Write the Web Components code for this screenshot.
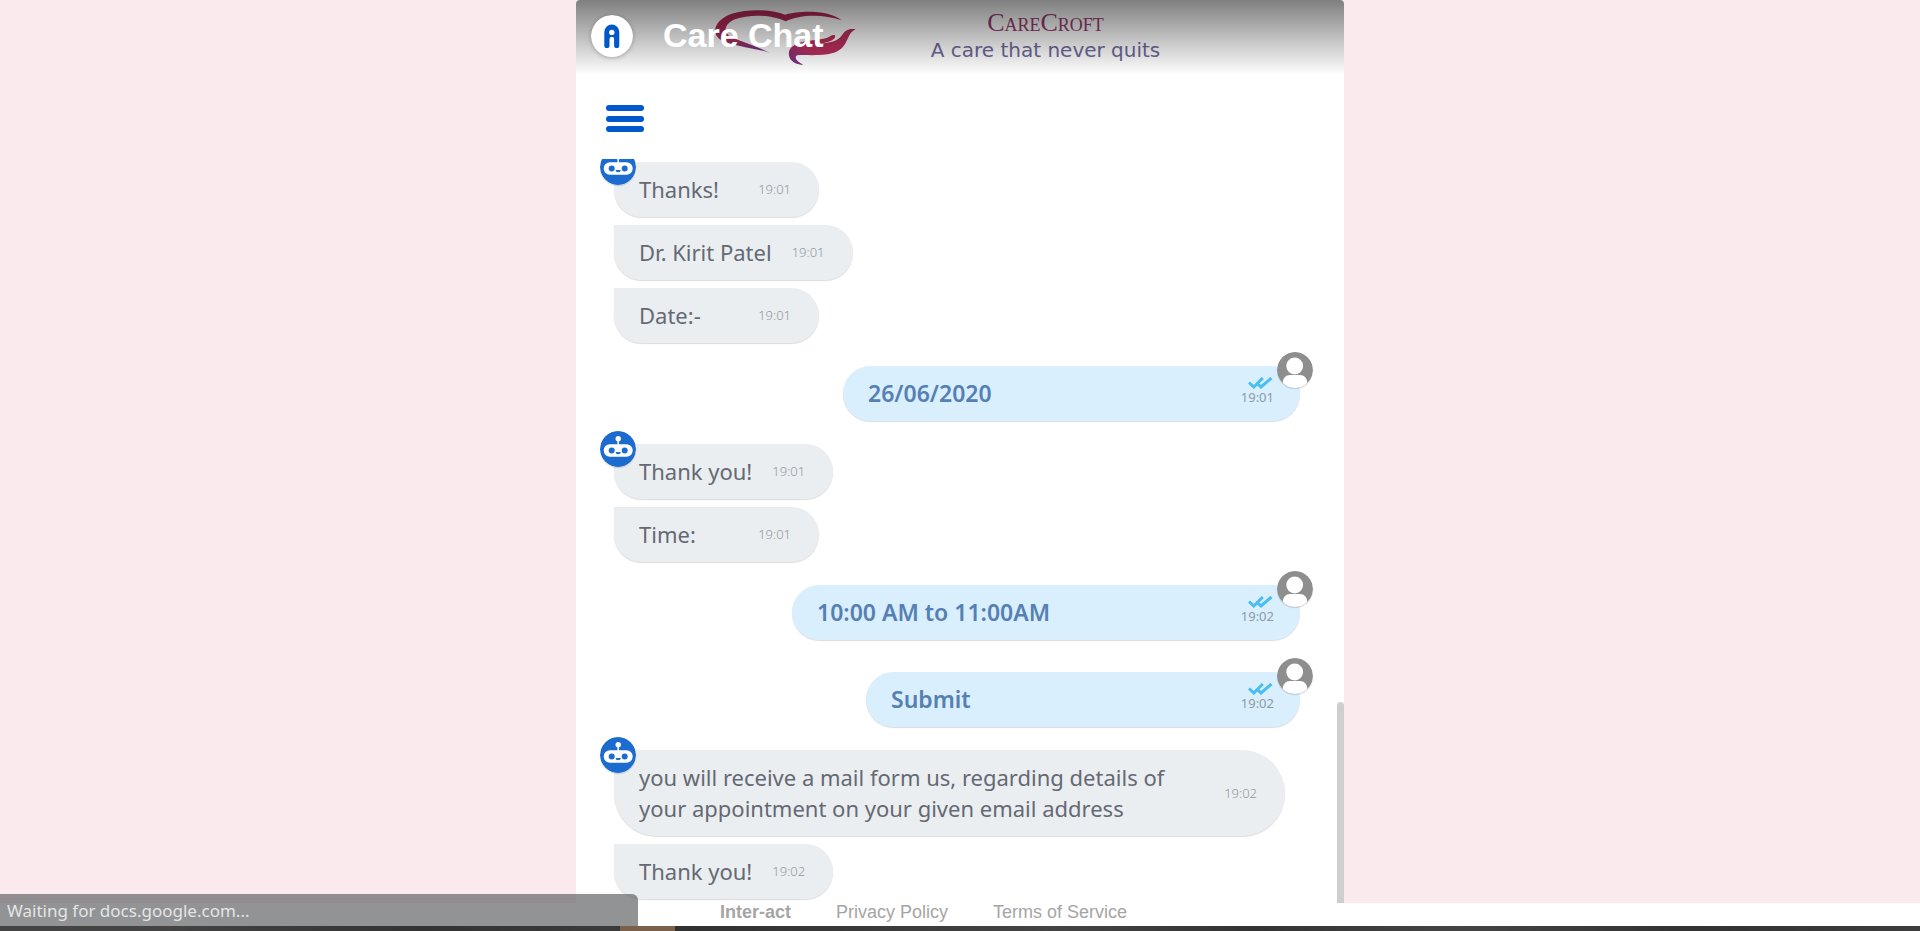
<!DOCTYPE html>
<html lang="en">
<head>
<meta charset="utf-8">
<title>Care Chat</title>
<style>
  html, body { height: 100%; margin: 0; }
  body { background: #faeaee; font-family: "Noto Sans", "Open Sans", sans-serif; overflow: hidden; }
</style>
</head>
<body>
<chat-page>
  <chat-header slot="header" name="Care Chat"></chat-header>
  <chat-menu slot="header"></chat-menu>
  <message-group>
    <bot-message avatar time="19:01">Thanks!</bot-message>
    <bot-message time="19:01">Dr. Kirit Patel</bot-message>
    <bot-message time="19:01">Date:-</bot-message>
  </message-group>
  <message-group>
    <user-message time="19:01" style="--bubble-width:457px">26/06/2020</user-message>
  </message-group>
  <message-group>
    <bot-message avatar time="19:01">Thank you!</bot-message>
    <bot-message time="19:01">Time:</bot-message>
  </message-group>
  <message-group spaced>
    <user-message time="19:02" style="--bubble-width:508px">10:00 AM to 11:00AM</user-message>
    <user-message time="19:02" style="--bubble-width:434px">Submit</user-message>
  </message-group>
  <message-group>
    <bot-message avatar wide time="19:02">you will receive a mail form us, regarding details of your appointment on your given email address</bot-message>
    <bot-message time="19:02">Thank you!</bot-message>
  </message-group>
  <page-footer slot="footer"></page-footer>
  <load-status slot="footer">Waiting for docs.google.com...</load-status>
</chat-page>

<script>
const define = (name, html, setup) => {
  const template = document.createElement('template');
  template.innerHTML = html;
  customElements.define(name, class extends HTMLElement {
    constructor() {
      super();
      this.attachShadow({ mode: 'open' }).append(template.content.cloneNode(true));
      if (setup) setup(this, this.shadowRoot);
    }
  });
};

define('chat-page', `
<style>
  :host { display: flex; flex-direction: column; height: 100vh; position: relative; }
  main { flex: 1; min-height: 0; width: 40%; min-width: 700px; margin: 0 auto; background: #fff;
         display: flex; flex-direction: column; border-radius: 4px 4px 0 0; overflow: hidden; }
  .log { flex: 1; min-height: 0; display: flex; overflow: hidden; }
  .messages { flex: 1; display: flex; flex-direction: column; gap: 23px; padding: 3px 37px 0 38px; }
  .thumb { width: 7px; height: 27%; align-self: flex-end; background: #cecece; border-radius: 4px 4px 0 0; }
</style>
<main>
  <slot name="header"></slot>
  <section class="log" aria-label="Conversation">
    <div class="messages"><slot></slot></div>
    <div class="thumb"></div>
  </section>
</main>
<slot name="footer"></slot>`);

define('brand-banner', `
<style>
  :host { display: flex; align-items: flex-start; height: 75px; box-sizing: border-box; padding: 8px 0 0 137px; background: #fff; }
  svg { width: 145px; height: 58px; flex: none; }
  .words { flex: none; width: 331px; margin-left: 22px; text-align: center; white-space: nowrap; }
  .brand { font: 26px/30px "Liberation Serif", serif; font-variant: small-caps; color: #993c72; }
  .tag { font: 20px/24px "DejaVu Sans", sans-serif; color: #6f689a; }
</style>
<svg viewBox="40 24 435 174" aria-hidden="true">
  <defs>
    <linearGradient id="heart" x1="0" y1="0" x2="0" y2="1"><stop offset="0" stop-color="#b52a58"/><stop offset=".7" stop-color="#b02c5c"/><stop offset="1" stop-color="#6b3590"/></linearGradient>
    <linearGradient id="hand" x1="1" y1="0" x2="0" y2="1"><stop offset="0" stop-color="#b83058"/><stop offset=".65" stop-color="#bd3060"/><stop offset="1" stop-color="#67308a"/></linearGradient>
  </defs>
  <path fill="url(#heart)" d="M210 158C160 142 90 138 58 116C32 92 52 56 96 41C150 25 218 29 256 44C300 31 390 29 426 61C370 41 300 43 258 64C210 43 150 42 106 58C72 72 70 98 94 111C130 126 170 139 210 158Z"/>
  <path fill="url(#hand)" d="M468 88C447 84 436 92 425 108C416 121 397 127 370 130C394 124 409 118 406 106C398 102 393 110 381 114C358 121 321 119 296 130C268 140 264 157 270 173C277 187 292 194 311 194C292 185 282 173 292 166C321 163 379 171 413 154C449 135 439 101 468 88Z"/>
</svg>
<div class="words">
  <div class="brand">CareCroft</div>
  <div class="tag">A care that never quits</div>
</div>`);

define('chat-header', `
<style>
  :host { display: block; position: relative; flex: none; }
  header { position: absolute; inset: 0; display: flex; align-items: center; gap: 30px; padding: 0 15px 4px;
           background: linear-gradient(rgba(0,0,0,.5), rgba(0,0,0,0)); }
  .logo { width: 42px; height: 42px; border-radius: 50%; flex: none; box-shadow: 0 1px 4px rgba(0,0,0,.25); }
  h1 { margin: 0; padding-bottom: 2px; font: bold 34px/38px "Liberation Sans", Arial, sans-serif; color: #fff; white-space: nowrap; }
</style>
<brand-banner></brand-banner>
<header>
  <svg class="logo" viewBox="0 0 42 42" aria-hidden="true">
    <circle cx="21" cy="21" r="21" fill="#fff"/>
    <path fill="#0058cc" d="M13.3 17a7.5 7.5 0 0 1 15 0V30.5a2.3 2.3 0 0 1-5.2 0V24a2.2 2.2 0 0 0-4.6 0V30.500a2.3 2.3 0 0 1-5.200 0Z"/>
    <circle cx="20.800" cy="17.400" r="2.700" fill="#fff"/>
  </svg>
  <h1></h1>
</header>`, (el, root) => { root.querySelector('h1').textContent = el.getAttribute('name'); });

define('chat-menu', `
<style>
  :host { display: flex; flex: none; padding: 30px 30px 27px; }
  button { display: flex; flex-direction: column; justify-content: space-between; width: 38px; height: 27px; padding: 0; border: 0; background: none; }
  i { height: 6px; border-radius: 3px; background: #0058cc; }
</style>
<button type="button" aria-label="Menu"><i></i><i></i><i></i></button>`);

define('message-group', `
<style>
  :host { display: flex; flex-direction: column; gap: 8px; flex: none; }
  :host([spaced]) { gap: 32px; }
</style>
<slot></slot>`);

define('bot-message', `
<style>
  :host { display: flex; position: relative; }
  .bubble { display: flex; align-items: center; justify-content: space-between; gap: 20px; min-width: 205px; box-sizing: border-box;
            padding: 12px 28px 12px 25px; border-radius: 0 50px 50px 50px; background: #eaeef1; box-shadow: 0 1px 1px rgba(0,0,0,.14);
            font-size: 22px; line-height: 31px; color: #656973; }
  :host([wide]) .bubble { width: 671px; gap: 40px; }
  time { font-size: 13px; color: #94979b; font-weight: 300; }
  .avatar { display: none; position: absolute; left: -14px; top: -13px; width: 36px; height: 36px; border-radius: 50%; box-shadow: 0 1px 1px rgba(0,0,0,.15); }
  :host([avatar]) .avatar { display: block; }
</style>
<div class="bubble"><span><slot></slot></span><time></time></div>
<svg class="avatar" viewBox="0 0 36 36" aria-hidden="true">
  <circle cx="18" cy="18" r="18" fill="#1b6bd0"/>
  <circle cx="18.200" cy="7.700" r="2.700" fill="#fff"/>
  <path d="M18.200 9v5" stroke="#fff" stroke-width="1.500"/>
  <rect x="3.700" y="13.300" width="29" height="12.400" rx="6.200" fill="#fff"/>
  <g fill="#1b6bd0"><circle cx="11.700" cy="19.600" r="3"/><circle cx="24.700" cy="19.600" r="3"/><path d="M15.600 21h5.200a2.600 2.200 0 0 1-5.200 0Z"/></g>
</svg>`, (el, root) => { root.querySelector('time').textContent = el.getAttribute('time'); });

define('user-message', `
<style>
  :host { display: flex; justify-content: flex-end; position: relative; }
  .bubble { display: flex; align-items: center; justify-content: space-between; box-sizing: border-box; width: var(--bubble-width, auto);
            height: 55px; padding: 0 26px 0 25px; border-radius: 28px; background: #d9effd; box-shadow: 0 1px 1px rgba(0,0,0,.14);
            font-size: 23px; line-height: 31px; font-weight: 600; color: #5680b3; }
  .meta { display: flex; flex-direction: column; align-items: flex-end; padding-bottom: 5px; }
  .ticks { width: 26px; height: 12px; }
  time { font-size: 13px; line-height: 16px; font-weight: 400; color: #8b9ba5; }
  .avatar { position: absolute; right: -13px; top: -14px; width: 36px; height: 36px; border-radius: 50%; box-shadow: 0 1px 1px rgba(0,0,0,.15); }
</style>
<div class="bubble"><span><slot></slot></span>
  <div class="meta">
    <svg class="ticks" viewBox="0 0 26 12" fill="none" stroke="#4abdf3" stroke-width="3" aria-label="Read"><path d="M1 5.500 5.800 10 14.800 1M10.300 7.500 13 10 23.500 1"/></svg>
    <time></time>
  </div>
</div>
<svg class="avatar" viewBox="0 0 36 36" aria-hidden="true">
  <defs><clipPath id="disc"><circle cx="18" cy="18" r="18"/></clipPath></defs>
  <g clip-path="url(#disc)">
    <rect width="36" height="36" fill="#8e8e8e"/>
    <circle cx="17.700" cy="14" r="8.400" fill="#fff"/>
    <path fill="#fff" d="M5.600 32C5.600 26 9 23 13 23H23C27 23 30.400 26 30.400 32L25 38H11Z"/>
  </g>
</svg>`, (el, root) => { root.querySelector('time').textContent = el.getAttribute('time'); });

define('page-footer', `
<style>
  :host { display: block; flex: none; font-family: "Liberation Sans", Arial, sans-serif; }
  nav { display: flex; gap: 45px; padding-left: 37.5%; background: #fff; font-size: 18px; line-height: 18px; padding-bottom: 5px; }
  a { color: #a5a5a5; text-decoration: none; white-space: nowrap; }
  .brand { font-weight: bold; }
  .strip { height: 5px; background: linear-gradient(90deg, #444 0 8%, #333 22%, #3b3b3b 32.300%, #7b604c 32.300% 35.150%, #303030 35.150%, #444 55%, #333 65%, #444 76%, #323232 88%, #3d3d3d); }
</style>
<footer>
  <nav><a class="brand" href="#">Inter-act</a><a href="#">Privacy Policy</a><a href="#">Terms of Service</a></nav>
  <div class="strip"></div>
</footer>`);

define('load-status', `
<style>
  :host { display: block; position: absolute; left: 0; bottom: 5px; width: 638px; height: 32px; box-sizing: border-box; padding-left: 7px;
          border-radius: 0 6px 0 0; background: rgba(87,89,92,.65); color: #e3e5e6; font-size: 17px; line-height: 33px; white-space: nowrap; }
</style>
<slot></slot>`);
</script>
</body>
</html>
